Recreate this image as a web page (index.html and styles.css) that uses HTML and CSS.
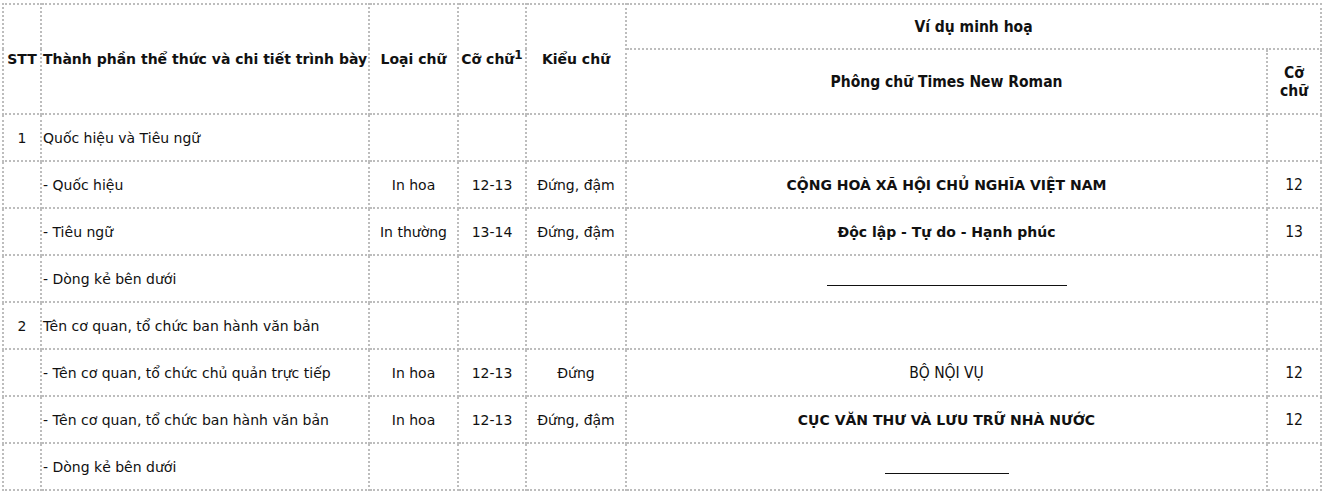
FILE: index.html
```html
<!DOCTYPE html>
<html lang="vi">
<head>
<meta charset="utf-8">
<link rel="stylesheet" href="styles.css">
</head>
<body>
<table class="spec">
  <colgroup>
    <col class="c-stt">
    <col class="c-name">
    <col class="c-type">
    <col class="c-size">
    <col class="c-style">
    <col class="c-example">
    <col class="c-exsize">
  </colgroup>
  <thead>
    <tr class="h1">
      <th rowspan="2">STT</th>
      <th rowspan="2" class="nowrap">Thành phần thể thức và chi tiết trình bày</th>
      <th rowspan="2">Loại chữ</th>
      <th rowspan="2">Cỡ chữ<sup>1</sup></th>
      <th rowspan="2">Kiểu chữ</th>
      <th colspan="2" class="alt">Ví dụ minh hoạ</th>
    </tr>
    <tr class="h2">
      <th class="alt">Phông chữ Times New Roman</th>
      <th class="alt">Cỡ chữ</th>
    </tr>
  </thead>
  <tbody>
    <tr>
      <td class="center">1</td>
      <td>Quốc hiệu và Tiêu ngữ</td>
      <td></td><td></td><td></td><td></td><td></td>
    </tr>
    <tr>
      <td></td>
      <td>- Quốc hiệu</td>
      <td class="center">In hoa</td>
      <td class="center">12-13</td>
      <td class="center">Đứng, đậm</td>
      <td class="center strong">CỘNG HOÀ XÃ HỘI CHỦ NGHĨA VIỆT NAM</td>
      <td class="center alt">12</td>
    </tr>
    <tr>
      <td></td>
      <td>- Tiêu ngữ</td>
      <td class="center">In thường</td>
      <td class="center">13-14</td>
      <td class="center">Đứng, đậm</td>
      <td class="center strong">Độc lập - Tự do - Hạnh phúc</td>
      <td class="center alt">13</td>
    </tr>
    <tr>
      <td></td>
      <td>- Dòng kẻ bên dưới</td>
      <td></td><td></td><td></td>
      <td class="center"><span class="rule long"></span></td>
      <td></td>
    </tr>
    <tr>
      <td class="center">2</td>
      <td>Tên cơ quan, tổ chức ban hành văn bản</td>
      <td></td><td></td><td></td><td></td><td></td>
    </tr>
    <tr>
      <td></td>
      <td>- Tên cơ quan, tổ chức chủ quản trực tiếp</td>
      <td class="center">In hoa</td>
      <td class="center">12-13</td>
      <td class="center">Đứng</td>
      <td class="center alt">BỘ NỘI VỤ</td>
      <td class="center alt">12</td>
    </tr>
    <tr>
      <td></td>
      <td>- Tên cơ quan, tổ chức ban hành văn bản</td>
      <td class="center">In hoa</td>
      <td class="center">12-13</td>
      <td class="center">Đứng, đậm</td>
      <td class="center strong">CỤC VĂN THƯ VÀ LƯU TRỮ NHÀ NƯỚC</td>
      <td class="center alt">12</td>
    </tr>
    <tr>
      <td></td>
      <td>- Dòng kẻ bên dưới</td>
      <td></td><td></td><td></td>
      <td class="center"><span class="rule short"></span></td>
      <td></td>
    </tr>
  </tbody>
</table>
</body>
</html>
```
FILE: styles.css
```css
html, body {
  margin: 0;
  padding: 0;
  background: #fff;
}
body {
  padding: 3px 2px 0 2px;
  font-family: "DejaVu Sans", Verdana, sans-serif;
  font-size: 14px;
  color: #111;
}
.spec {
  border-collapse: collapse;
  table-layout: fixed;
  width: 1319px;
  border: 1px dashed #ccc;
}
.c-stt { width: 38px; }
.c-name { width: 328px; }
.c-type { width: 89px; }
.c-size { width: 68px; }
.c-style { width: 100px; }
.c-example { width: 641px; }
.c-exsize { width: 54px; }
.spec th,
.spec td {
  border: 2px dotted #bdbdbd;
  padding: 0 1px;
  vertical-align: middle;
}
.spec th {
  font-weight: bold;
  text-align: center;
  padding: 0;
}
.spec th.nowrap { white-space: nowrap; }
.spec tr.h1 { height: 45px; }
.spec tr.h2 { height: 65px; }
.spec tbody tr { height: 47px; }
.spec td.center { text-align: center; }
.spec .alt {
  font-family: "DejaVu Sans Condensed", Tahoma, sans-serif;
  font-size: 15.5px;
  line-height: 18px;
}
.spec th.alt { font-weight: bold; }
.spec td.strong { font-weight: bold; }
.spec sup {
  font-size: 12px;
  vertical-align: 5px;
  line-height: 0;
}
.rule {
  display: inline-block;
  border-bottom: 1px solid #111;
  height: 0;
  vertical-align: -2px;
}
.rule.long { width: 240px; }
.rule.short { width: 124px; }
```
